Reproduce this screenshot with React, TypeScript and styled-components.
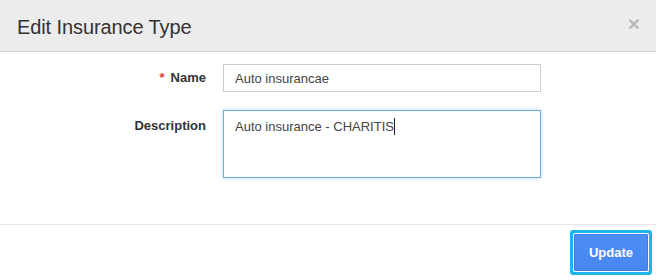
import styled, { createGlobalStyle } from "styled-components";

const GlobalStyle = createGlobalStyle`
  html, body {
    margin: 0;
    padding: 0;
    background: #ffffff;
  }
  body {
    font-family: "Liberation Sans", Arial, sans-serif;
    color: #333333;
  }
`;

const Modal = styled.div`
  width: 656px;
  height: 280px;
  display: flex;
  flex-direction: column;
  background: #ffffff;
  overflow: hidden;
`;

const Header = styled.div`
  height: 52px;
  box-sizing: border-box;
  display: flex;
  align-items: center;
  justify-content: space-between;
  padding: 0 16px 0 17px;
  background: #ececec;
  border-bottom: 1px solid #d0d0d0;
`;

const Title = styled.h4`
  margin: 0;
  font-size: 20px;
  font-weight: 400;
  line-height: 22px;
  color: #333333;
  padding-top: 2px;
  letter-spacing: -0.1px;
`;

const Close = styled.button`
  border: 0;
  background: transparent;
  padding: 0;
  font-family: "Liberation Sans", Arial, sans-serif;
  font-size: 21px;
  font-weight: 700;
  line-height: 1;
  color: #000;
  opacity: 0.22;
  margin-top: -4px;
  cursor: pointer;
`;

const Body = styled.div`
  flex: 1;
  padding: 12px 0 0;
  display: grid;
  grid-template-columns: 206px 318px;
  column-gap: 17px;
  row-gap: 18px;
  align-content: start;
  border-bottom: 1px solid #e5e5e5;
`;

const Label = styled.label<{ $top: number }>`
  text-align: right;
  font-size: 13px;
  font-weight: 700;
  color: #333333;
  padding-top: ${(p) => p.$top}px;
`;

const Required = styled.span`
  color: #e53935;
  font-weight: 700;
  margin-right: 6px;
`;

const TextInput = styled.input`
  box-sizing: border-box;
  width: 318px;
  height: 28px;
  padding: 0 11px;
  border: 1px solid #cccccc;
  border-radius: 0;
  font-family: "Liberation Sans", Arial, sans-serif;
  font-size: 13px;
  color: #444444;
  outline: none;
`;

const TextArea = styled.div`
  box-sizing: border-box;
  width: 318px;
  height: 68px;
  padding: 7px 11px 6px;
  border: 1px solid #66afe9;
  box-shadow: 0 0 4px rgba(102, 175, 233, 0.45);
  font-size: 13px;
  line-height: 18px;
  color: #444444;
`;

const Caret = styled.span`
  display: inline-block;
  width: 1px;
  height: 17px;
  background: #222;
  vertical-align: -4px;
`;

const Footer = styled.div`
  height: 55px;
  box-sizing: border-box;
  display: flex;
  justify-content: flex-end;
  align-items: flex-start;
  padding: 9px 8px 0 0;
`;

const PrimaryButton = styled.button`
  width: 74px;
  height: 37px;
  border: 1px solid #3d7be6;
  border-radius: 1px;
  background: linear-gradient(#4f8ef6, #4886f0);
  color: #ffffff;
  font-family: "Liberation Sans", Arial, sans-serif;
  font-size: 13px;
  font-weight: 700;
  box-shadow: 0 0 0 1px #ffffff, 0 0 0 4px #1db5e9;
  cursor: pointer;
`;

export default function App() {
  return (
    <>
      <GlobalStyle />
      <Modal>
        <Header>
          <Title>Edit Insurance Type</Title>
          <Close aria-label="Close">×</Close>
        </Header>
        <Body>
          <Label $top={6}>
            <Required>*</Required>Name
          </Label>
          <TextInput readOnly value="Auto insurancae" />
          <Label $top={8}>Description</Label>
          <TextArea>
            Auto insurance - CHARITIS
            <Caret />
          </TextArea>
        </Body>
        <Footer>
          <PrimaryButton>Update</PrimaryButton>
        </Footer>
      </Modal>
    </>
  );
}
